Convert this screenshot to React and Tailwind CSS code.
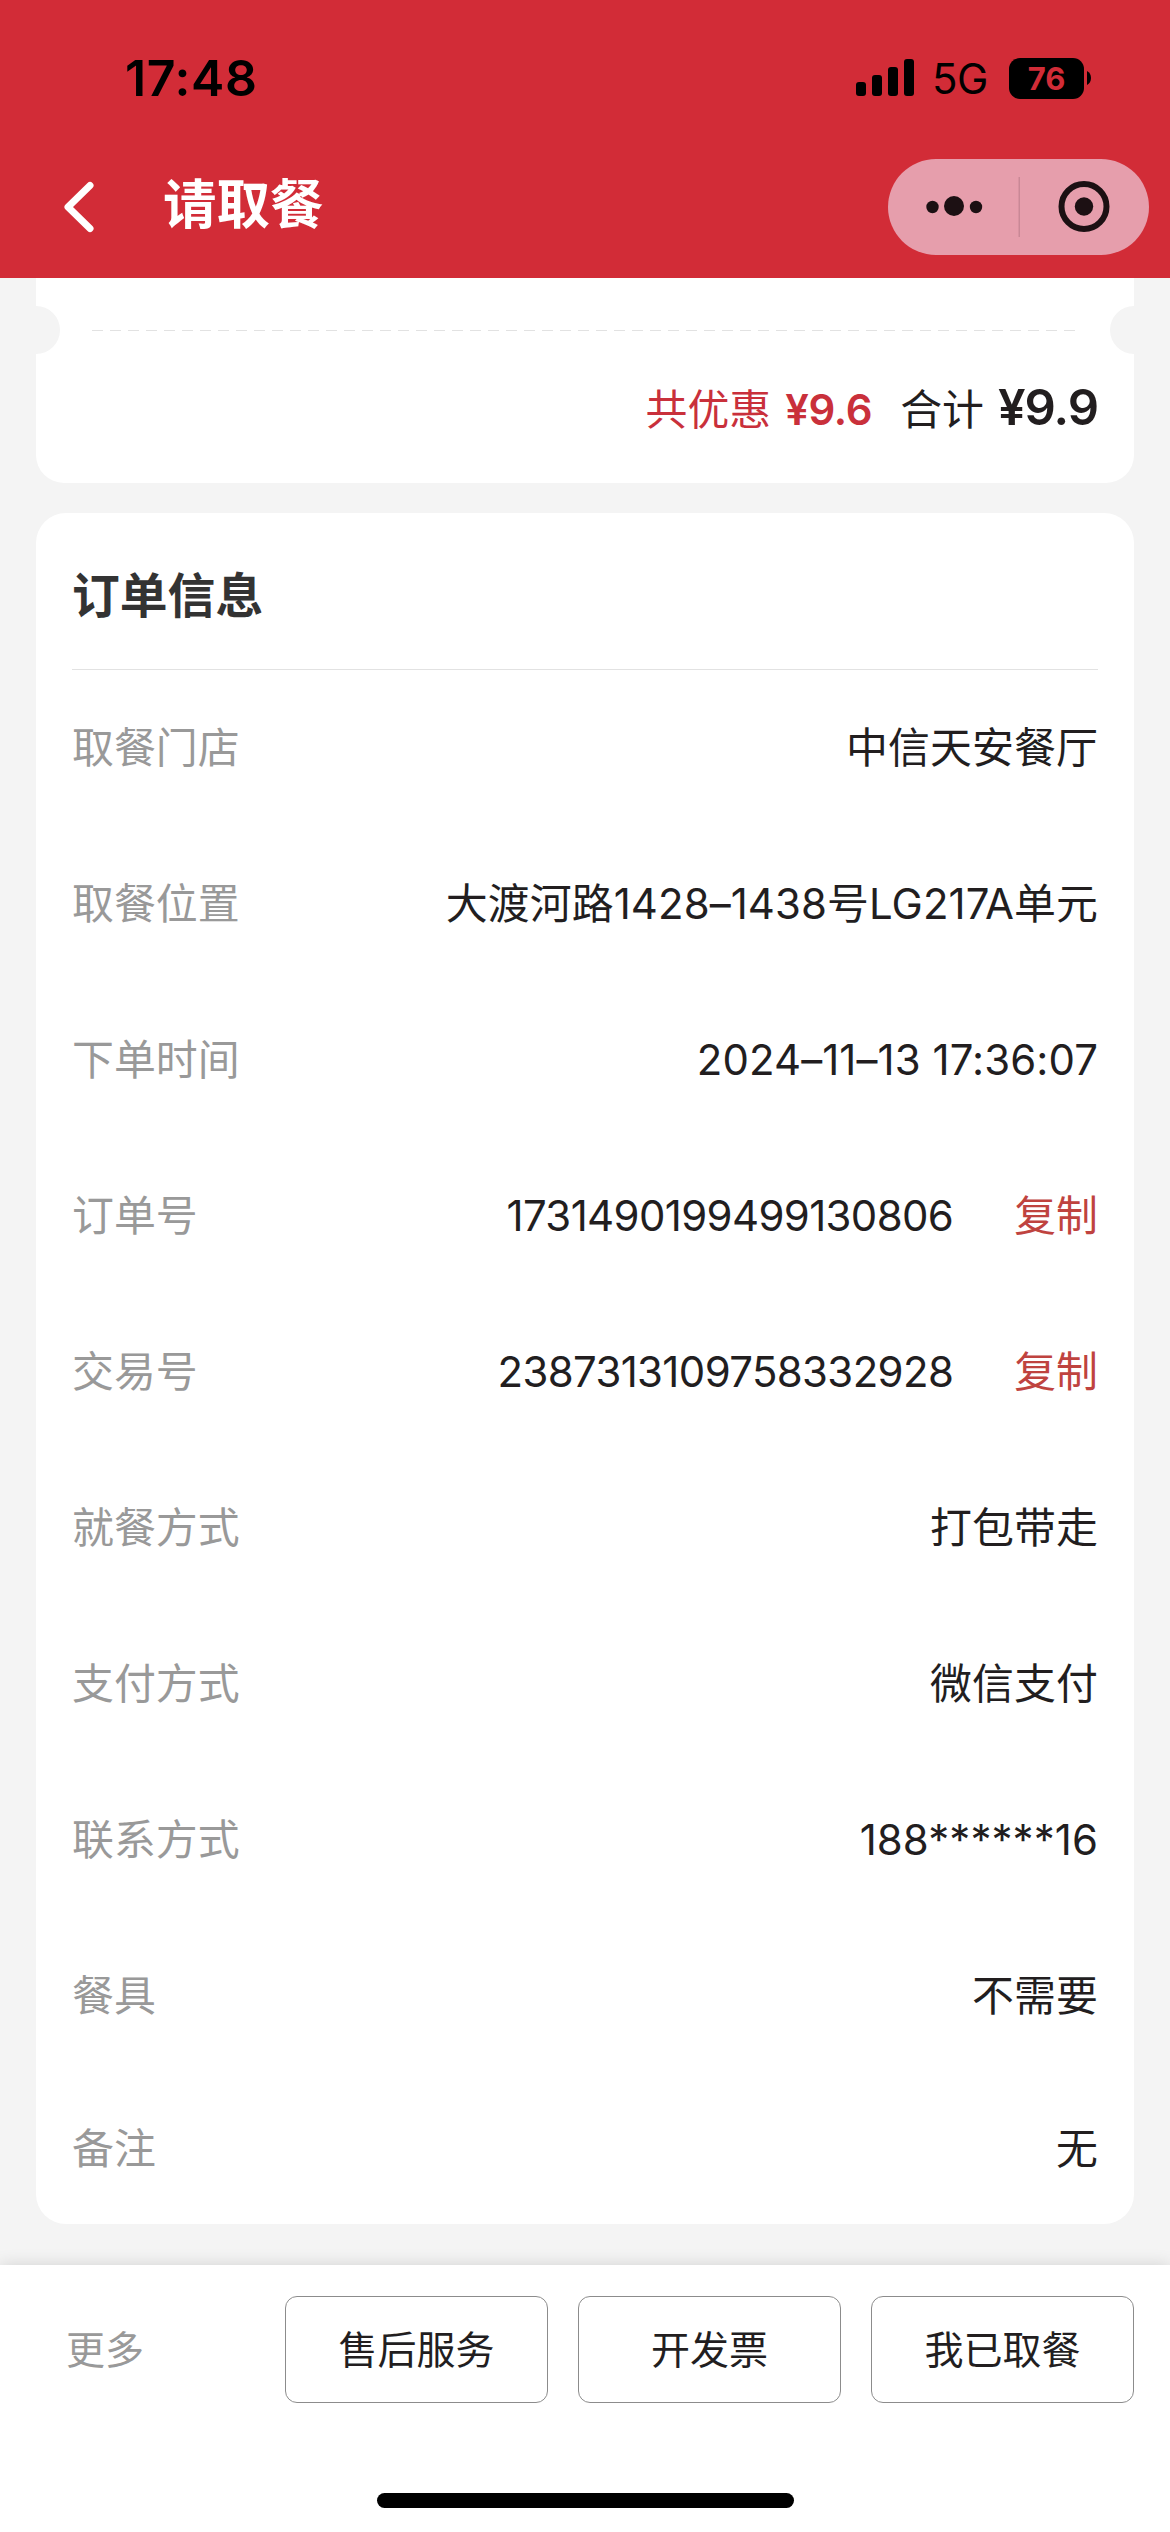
import { useState } from 'react';

const orderInfo = [
    { label: '取餐门店', value: '中信天安餐厅' },
    { label: '取餐位置', value: '大渡河路1428–1438号LG217A单元' },
    { label: '下单时间', value: '2024–11–13 17:36:07' },
    { label: '订单号', value: '1731490199499130806', copy: true },
    { label: '交易号', value: '2387313109758332928', copy: true },
    { label: '就餐方式', value: '打包带走' },
    { label: '支付方式', value: '微信支付' },
    { label: '联系方式', value: '188******16' },
    { label: '餐具', value: '不需要' },
    { label: '备注', value: '无' },
];

const actions = ['售后服务', '开发票', '我已取餐'];

function StatusBar() {
    return (
        <div className="flex h-[156px] items-center justify-between pl-[125px] pr-[79px] text-black">
            <span className="text-[50px] font-semibold leading-none tracking-[0.6px]">17:48</span>
            <div className="flex items-center">
                <svg width="58" height="38" viewBox="0 0 58 38" fill="currentColor">
                    <rect x="0" y="23" width="10" height="14" rx="3" />
                    <rect x="16" y="16" width="10" height="21" rx="3" />
                    <rect x="32" y="8" width="10" height="29" rx="3" />
                    <rect x="48" y="0" width="10" height="37" rx="3" />
                </svg>
                <span className="ml-[18px] w-[58px] pt-0.5 text-[42px] leading-none tracking-[-0.5px]">5G</span>
                <div className="ml-[19px] flex h-[41px] w-[75px] items-center justify-center rounded-[11px] bg-black text-[31px] font-bold leading-none text-[#d22c37]">
                    76
                </div>
                <svg className="ml-[3px]" width="4" height="14" viewBox="0 0 4 14" fill="currentColor">
                    <path d="M0 0C2.600 1.200 4 3.800 4 7S2.600 12.800 0 14Z" />
                </svg>
            </div>
        </div>
    );
}

function NavBar() {
    return (
        <div className="flex h-[102px] items-center pl-[62px] pr-[21px]">
            <svg width="34" height="54" viewBox="0 0 34 54" fill="none" stroke="white" strokeWidth="7" strokeLinecap="round" strokeLinejoin="round">
                <path d="M28 5.500L6 27L28 48.500" />
            </svg>
            <h1 className="ml-[67px] pb-1 text-[53.5px] font-bold leading-none text-white">请取餐</h1>
            <div className="ml-auto flex h-24 w-[261px] items-center rounded-full bg-[#e69eac]">
                <svg width="261" height="96" viewBox="0 0 261 96" fill="#1c1013">
                    <circle cx="44.500" cy="48" r="6.200" />
                    <circle cx="66" cy="47" r="10" />
                    <circle cx="88" cy="48" r="6.200" />
                    <path d="M130.500 18h1.500v60h-1.500z" fill="#c98896" />
                    <circle cx="196" cy="47.500" r="22.500" fill="none" stroke="#1c1013" strokeWidth="6" />
                    <circle cx="196" cy="47.500" r="9.200" />
                </svg>
            </div>
        </div>
    );
}

function InfoRow({ label, value, copy }) {
    const [copied, setCopied] = useState(false);

    return (
        <div className="flex h-[156px] items-center justify-between last:h-[150px]">
            <span className="text-[#999999]">{label}</span>
            <div className="flex items-center">
                <span className={copy ? 'tracking-[-0.6px]' : 'tracking-[0.1px]'}>{value}</span>
                {copy && (
                    <button className="ml-[61px] text-[#bf433f]" onClick={() => setCopied(true)}>
                        {copied ? '已复制' : '复制'}
                    </button>
                )}
            </div>
        </div>
    );
}

export default function App() {
    return (
        <div className="flex h-[2532px] w-[1170px] flex-col overflow-hidden bg-[#f4f4f4] font-['Inter','Noto_Sans_CJK_SC',sans-serif] text-[41.9px] leading-[60px] text-[#221e1f]">
            <header className="h-[278px] shrink-0 bg-[#d22c37]">
                <StatusBar />
                <NavBar />
            </header>

            <main className="flex flex-1 flex-col gap-[30px] px-9">
                {/* bottom of the ticket card */}
                <section className="relative h-[205px] overflow-hidden rounded-b-[28px] bg-white">
                    <div className="absolute -left-6 top-7 size-12 rounded-full bg-[#f4f4f4]" />
                    <div className="absolute -right-6 top-7 size-12 rounded-full bg-[#f4f4f4]" />
                    <svg className="ml-14 mt-[52px] block" width="986" height="2" viewBox="0 0 986 2">
                        <path d="M0 0.500H986" stroke="#e2e2e2" strokeDasharray="11 7" />
                    </svg>
                    <div className="mt-[46px] flex items-baseline justify-end pr-9">
                        <span className="text-[#c9303b]">共优惠</span>
                        <span className="ml-3.5 font-semibold tracking-[-0.3px] text-[#c9303b]">¥9.6</span>
                        <span className="ml-[28px]">合计</span>
                        <span className="ml-3.5 text-[49px] font-semibold tracking-[-1px]">¥9.9</span>
                    </div>
                </section>

                <section className="h-[1711px] rounded-[30px] bg-white px-9">
                    <h2 className="flex h-[157px] items-center border-b border-[#e2e2e2] pt-2.5 text-[47.8px] font-bold text-[#333333]">
                        订单信息
                    </h2>
                    <div>
                        {orderInfo.map((item) => (
                            <InfoRow key={item.label} {...item} />
                        ))}
                    </div>
                </section>
            </main>

            <footer className="flex h-[267px] shrink-0 flex-col items-center bg-white shadow-[0_0_16px_rgba(0,0,0,0.14)]">
                <div className="mt-[31px] flex w-full items-center gap-[30px] pl-[66px] pr-9 text-[39px]">
                    <span className="flex-1 text-[#999999]">更多</span>
                    {actions.map((name) => (
                        <button key={name} className="h-[107px] w-[263px] rounded-xl border border-[#8c8c8c]">
                            {name}
                        </button>
                    ))}
                </div>
                <div className="mt-[90px] h-[15px] w-[417px] rounded-full bg-black" />
            </footer>
        </div>
    );
}
